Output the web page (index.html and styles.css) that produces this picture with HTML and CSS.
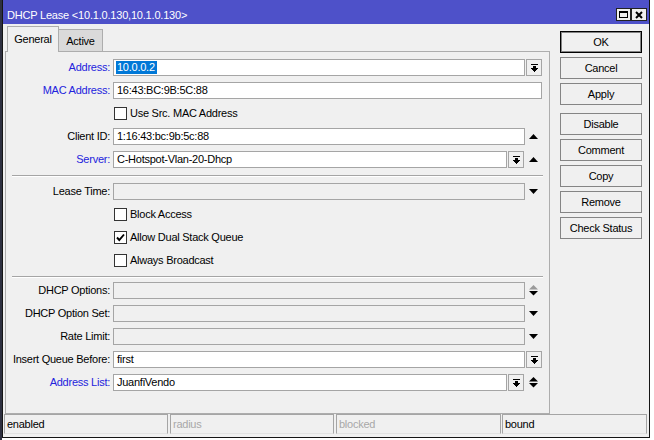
FILE: index.html
```html
<!DOCTYPE html>
<html>
<head>
<meta charset="utf-8">
<title>DHCP Lease</title>
<link rel="stylesheet" href="styles.css">
</head>
<body>
<div class="win">
  <div class="titlebar">
    <span class="title">DHCP Lease &lt;10.1.0.130,10.1.0.130&gt;</span>
    <div class="tbtns">
      <span class="tb"><svg width="9" height="7" viewBox="0 0 9 7" shape-rendering="crispEdges"><rect x="0" y="0" width="9" height="2" fill="#000"/><rect x="0.5" y="0.5" width="8" height="6" fill="none" stroke="#000"/></svg></span>
      <span class="tb close"><svg width="8" height="8" viewBox="0 0 8 8"><path d="M1 1 L7 7 M7 1 L1 7" stroke="#000" stroke-width="2" fill="none"/></svg></span>
    </div>
  </div>
  <div class="main">
    <div class="left">
      <div class="tabs">
        <span class="tab sel-tab">General</span>
        <span class="tab other">Active</span>
      </div>
      <div class="panel">
        <div class="sec">
          <div class="row">
            <span class="lbl blue">Address:</span>
            <div class="inp"><span class="hl">10.0.0.2</span></div>
            <span class="ddb"><svg width="7" height="8" viewBox="0 0 7 8" shape-rendering="crispEdges"><rect x="0" y="0" width="7" height="1"/><rect x="2" y="2" width="3" height="2"/><rect x="0" y="4" width="7" height="1"/><rect x="1" y="5" width="5" height="1"/><rect x="2" y="6" width="3" height="1"/><rect x="3" y="7" width="1" height="1"/></svg></span>
          </div>
          <div class="row">
            <span class="lbl blue">MAC Address:</span>
            <div class="inp">16:43:BC:9B:5C:88</div>
          </div>
          <div class="cbrow">
            <span class="cb"></span><span>Use Src. MAC Address</span>
          </div>
          <div class="row">
            <span class="lbl">Client ID:</span>
            <div class="inp">1:16:43:bc:9b:5c:88</div>
            <span class="arr"><svg width="9" height="5" viewBox="0 0 9 5"><polygon points="0,5 9,5 4.5,0" fill="#000"/></svg></span>
          </div>
          <div class="row">
            <span class="lbl blue">Server:</span>
            <div class="inp">C-Hotspot-Vlan-20-Dhcp</div>
            <span class="ddb mid"><svg width="7" height="8" viewBox="0 0 7 8" shape-rendering="crispEdges"><rect x="0" y="0" width="7" height="1"/><rect x="2" y="2" width="3" height="2"/><rect x="0" y="4" width="7" height="1"/><rect x="1" y="5" width="5" height="1"/><rect x="2" y="6" width="3" height="1"/><rect x="3" y="7" width="1" height="1"/></svg></span>
            <span class="arr"><svg width="9" height="5" viewBox="0 0 9 5"><polygon points="0,5 9,5 4.5,0" fill="#000"/></svg></span>
          </div>
        </div>
        <div class="sep"></div>
        <div class="sec">
          <div class="row">
            <span class="lbl">Lease Time:</span>
            <div class="inp dis"></div>
            <span class="arr"><svg width="9" height="5" viewBox="0 0 9 5"><polygon points="0,0 9,0 4.5,5" fill="#000"/></svg></span>
          </div>
          <div class="cbrow">
            <span class="cb"></span><span>Block Access</span>
          </div>
          <div class="cbrow">
            <span class="cb"><svg width="11" height="11" viewBox="0 0 11 11"><path d="M2 5.5 L4.3 8 L9 2.5" stroke="#000" stroke-width="1.9" fill="none"/></svg></span><span>Allow Dual Stack Queue</span>
          </div>
          <div class="cbrow">
            <span class="cb"></span><span>Always Broadcast</span>
          </div>
        </div>
        <div class="sep tight"></div>
        <div class="sec">
          <div class="row">
            <span class="lbl">DHCP Options:</span>
            <div class="inp dis"></div>
            <span class="arr"><svg width="9" height="11" viewBox="0 0 9 11"><polygon points="0,4.5 9,4.5 4.5,0" fill="#9a9a9a"/><polygon points="0,6 9,6 4.5,10.5" fill="#000"/></svg></span>
          </div>
          <div class="row">
            <span class="lbl">DHCP Option Set:</span>
            <div class="inp dis"></div>
            <span class="arr"><svg width="9" height="5" viewBox="0 0 9 5"><polygon points="0,0 9,0 4.5,5" fill="#000"/></svg></span>
          </div>
          <div class="row">
            <span class="lbl">Rate Limit:</span>
            <div class="inp dis"></div>
            <span class="arr"><svg width="9" height="5" viewBox="0 0 9 5"><polygon points="0,0 9,0 4.5,5" fill="#000"/></svg></span>
          </div>
          <div class="row">
            <span class="lbl">Insert Queue Before:</span>
            <div class="inp">first</div>
            <span class="ddb"><svg width="7" height="8" viewBox="0 0 7 8" shape-rendering="crispEdges"><rect x="0" y="0" width="7" height="1"/><rect x="2" y="2" width="3" height="2"/><rect x="0" y="4" width="7" height="1"/><rect x="1" y="5" width="5" height="1"/><rect x="2" y="6" width="3" height="1"/><rect x="3" y="7" width="1" height="1"/></svg></span>
          </div>
          <div class="row">
            <span class="lbl blue">Address List:</span>
            <div class="inp">JuanfiVendo</div>
            <span class="ddb mid"><svg width="7" height="8" viewBox="0 0 7 8" shape-rendering="crispEdges"><rect x="0" y="0" width="7" height="1"/><rect x="2" y="2" width="3" height="2"/><rect x="0" y="4" width="7" height="1"/><rect x="1" y="5" width="5" height="1"/><rect x="2" y="6" width="3" height="1"/><rect x="3" y="7" width="1" height="1"/></svg></span>
            <span class="arr"><svg width="9" height="11" viewBox="0 0 9 11"><polygon points="0,4.5 9,4.5 4.5,0" fill="#000"/><polygon points="0,6 9,6 4.5,10.5" fill="#000"/></svg></span>
          </div>
        </div>
      </div>
    </div>
    <div class="right">
      <div class="btn def">OK</div>
      <div class="btn">Cancel</div>
      <div class="btn">Apply</div>
      <div class="btn grp">Disable</div>
      <div class="btn">Comment</div>
      <div class="btn">Copy</div>
      <div class="btn">Remove</div>
      <div class="btn">Check Status</div>
    </div>
  </div>
  <div class="status">
    <div class="seg s1">enabled</div>
    <div class="seg s2 muted">radius</div>
    <div class="seg s3 muted">blocked</div>
    <div class="seg s4">bound</div>
  </div>
</div>
</body>
</html>
```
FILE: styles.css
```css
* { box-sizing: border-box; }
html, body { margin: 0; padding: 0; }
body {
  width: 654px;
  height: 440px;
  overflow: hidden;
  background: linear-gradient(to right, #2e3040 0, #2e3040 2px, #ffffff 2px);
  font-family: "Liberation Sans", Arial, sans-serif;
  font-size: 11px;
  letter-spacing: -0.25px;
  color: #000;
}
.win {
  margin-left: 2px;
  width: 648px;
  height: 438px;
  border: 1px solid #151515;
  border-top: 0;
  background: #f0f0f0;
  display: flex;
  flex-direction: column;
}
.titlebar {
  height: 24px;
  flex: none;
  background: #4e51c9;
  color: #fff;
  display: flex;
  justify-content: space-between;
  align-items: flex-start;
}
.title {
  padding: 7px 0 0 4px;
  line-height: 16px;
  letter-spacing: -0.2px;
  white-space: nowrap;
}
.tbtns {
  display: flex;
  margin: 8px 2px 0 0;
}
.tb {
  width: 15px;
  height: 13px;
  border: 1px solid #222;
  background: #f0f0f0;
  display: flex;
  align-items: center;
  justify-content: center;
}
.tb.close { width: 16px; }
.main {
  height: 390px;
  flex: none;
  display: flex;
}
.left {
  width: 545px;
  margin-left: 2px;
  padding-top: 2px;
  display: flex;
  flex-direction: column;
}
.tabs {
  height: 25px;
  padding-left: 2px;
  display: flex;
  align-items: flex-end;
}
.tab {
  border: 1px solid #adadad;
  border-bottom: 0;
  text-align: center;
  line-height: 17px;
  white-space: nowrap;
}
.sel-tab {
  width: 52px;
  height: 26px;
  margin-bottom: -1px;
  padding-top: 4px;
  background: #f0f0f0;
  position: relative;
  z-index: 1;
}
.other {
  width: 44px;
  height: 22px;
  padding-top: 3px;
  background: #dadada;
  border-left: 0;
}
.panel {
  flex: 1;
  border: 1px solid #adadad;
  padding-top: 7px;
}
.sec {
  display: flex;
  flex-direction: column;
  gap: 6px;
}
.row {
  display: flex;
  height: 17px;
  padding-right: 7px;
}
.lbl {
  width: 104px;
  margin-right: 3px;
  text-align: right;
  line-height: 17px;
  white-space: nowrap;
  flex: none;
}
.blue { color: #2323dd; }
.inp {
  flex: 1;
  height: 17px;
  border: 1px solid #a5a5a5;
  background: #fff;
  line-height: 15px;
  padding-left: 3px;
  white-space: nowrap;
  overflow: hidden;
}
.inp.dis { background: #f0f0f0; }
.hl {
  display: inline-block;
  line-height: 13px;
  margin-left: -1px;
  padding: 0 2px 0 1px;
  background: #0078d7;
  color: #fff;
}
.ddb {
  flex: none;
  width: 16px;
  height: 17px;
  margin-left: 1px;
  border: 1px solid #a5a5a5;
  background: #f0f0f0;
  display: flex;
  align-items: center;
  justify-content: center;
}
.ddb svg { fill: #000; }
.ddb.mid { margin-right: 1px; }
.arr {
  flex: none;
  width: 17px;
  display: flex;
  align-items: center;
  justify-content: center;
}
.cbrow {
  display: flex;
  align-items: center;
  height: 17px;
  padding-left: 108px;
  line-height: 17px;
  white-space: nowrap;
}
.cb {
  width: 13px;
  height: 13px;
  border: 1px solid #333;
  background: #fff;
  margin-right: 3px;
  display: flex;
  align-items: center;
  justify-content: center;
}
.sep {
  margin: 7px 6px 6px 6px;
  height: 2px;
  border-top: 1px solid #a5a5a5;
  border-bottom: 1px solid #ffffff;
}
.sep.tight { margin-bottom: 4px; }
.right {
  width: 82px;
  margin-left: 10px;
  padding-top: 7px;
  display: flex;
  flex-direction: column;
  gap: 4px;
}
.btn {
  height: 22px;
  border: 1px solid #858585;
  background: #f0f0f0;
  text-align: center;
  line-height: 20px;
  white-space: nowrap;
}
.btn.def {
  border-color: #000;
  box-shadow: inset 0 0 0 1px rgba(0, 0, 0, 0.45);
}
.btn.grp { margin-top: 4px; }
.status {
  height: 23px;
  flex: none;
  display: flex;
  padding-left: 1px;
}
.seg {
  height: 20px;
  border: 1px solid #a5a5a5;
  border-bottom-color: #e2e2e2;
  line-height: 18px;
  padding-left: 2px;
  white-space: nowrap;
}
.s1 { width: 164px; margin-right: 2px; }
.s2 { width: 164px; margin-right: 2px; }
.s3 { width: 165px; margin-right: 1px; }
.s4 { width: 145px; }
.muted { color: #a8a8a8; }
```
